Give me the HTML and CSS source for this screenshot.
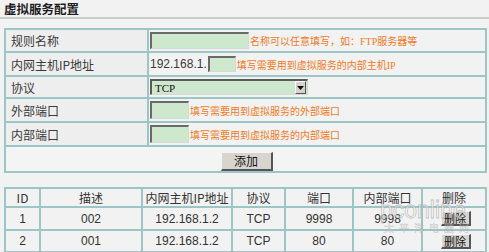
FILE: index.html
```html
<!DOCTYPE html>
<html lang="zh-CN">
<head>
<meta charset="utf-8">
<title>虚拟服务配置</title>
<link rel="stylesheet" href="styles.css">
</head>
<body>
<div class="page">
  <h1 class="title">虚拟服务配置</h1>
  <table class="form">
    <colgroup><col class="c-label"><col></colgroup>
    <tr class="r1">
      <td class="label">规则名称</td>
      <td class="field"><span class="input w-name"></span><span class="hint">名称可以任意填写，如：<span class="lat">FTP</span>服务器等</span></td>
    </tr>
    <tr class="r2">
      <td class="label">内网主机IP地址</td>
      <td class="field"><span class="ipfix">192.168.1.</span><span class="input w-ip"></span><span class="hint">填写需要用到虚拟服务的内部主机<span class="lat">IP</span></span></td>
    </tr>
    <tr class="r3">
      <td class="label">协议</td>
      <td class="field"><span class="select"><span class="sel-text">TCP</span><span class="sel-btn"><svg width="7" height="4" viewBox="0 0 7 4"><path d="M0 0h7L3.5 4z" fill="#111"/></svg></span></span></td>
    </tr>
    <tr class="r4">
      <td class="label">外部端口</td>
      <td class="field"><span class="input w-port"></span><span class="hint">填写需要用到虚拟服务的外部端口</span></td>
    </tr>
    <tr class="r5">
      <td class="label">内部端口</td>
      <td class="field"><span class="input w-port"></span><span class="hint">填写需要用到虚拟服务的内部端口</span></td>
    </tr>
    <tr class="r6">
      <td class="actions" colspan="2"><span class="btn btn-add">添加</span></td>
    </tr>
  </table>

  <div class="list-wrap">
    <table class="list">
      <colgroup>
        <col class="k1"><col class="k2"><col class="k3"><col class="k4"><col class="k5"><col class="k6"><col class="k7">
      </colgroup>
      <tr class="head">
        <td>ID</td><td>描述</td><td>内网主机IP地址</td><td>协议</td><td>端口</td><td>内部端口</td><td>删除</td>
      </tr>
      <tr class="row a">
        <td>1</td><td>002</td><td>192.168.1.2</td><td>TCP</td><td>9998</td><td>9998</td><td><span class="btn btn-del">删除</span></td>
      </tr>
      <tr class="row b">
        <td>2</td><td>001</td><td>192.168.1.2</td><td>TCP</td><td>80</td><td>80</td><td><span class="btn btn-del">删除</span></td>
      </tr>
    </table>
    <div class="watermark"><span class="wm-big">pconline</span><span class="wm-small">太平洋电脑网</span></div>
  </div>
</div>
</body>
</html>
```

FILE: styles.css
```css
* { box-sizing: border-box; }
html, body { margin: 0; padding: 0; }
body {
  background: #f2f2f2;
  font-family: "Noto Sans CJK SC", "Liberation Sans", sans-serif;
  color: #333;
  width: 489px;
  height: 252px;
  overflow: hidden;
}
.page { padding: 2px 2px 0 4px; }
.title {
  margin: 0;
  font-size: 12.5px;
  line-height: 14px;
  font-weight: bold;
  color: #1e1e1e;
  height: 15px;
  border-bottom: 2px solid #c9cdcd;
  margin-left: -4px;
  margin-right: -2px;
  padding-left: 4px;
  box-sizing: content-box;
}
.form {
  margin-top: 9px;
  border-collapse: separate;
  border-spacing: 0;
  width: 483px;
  table-layout: fixed;
  border-top: 2px solid #9cc5c5;
  border-left: 2px solid #9cc5c5;
}
.form td {
  border-right: 2px solid #9cc5c5;
  border-bottom: 2px solid #9cc5c5;
  padding: 0;
  vertical-align: middle;
}
.c-label { width: 143px; }
.form .label {
  padding-left: 5px;
  font-size: 12px;
  color: #3a3a3a;
  background: #eeeeee;
}
.form .r1 td { height: 23px; }
.form .r2 td { height: 24px; }
.form .r3 td { height: 22px; }
.form .r4 td { height: 24px; }
.form .r5 td { height: 24px; }
.form .r6 td { height: 23px; }
.field {
  padding-left: 1px !important;
  white-space: nowrap;
  font-size: 0;
}
.field > * { vertical-align: middle; }
.input {
  display: inline-block;
  background: #cde8cd;
  border-top: 2px solid #6a6a6a;
  border-left: 2px solid #6a6a6a;
  border-right: 1px solid #d8d8d8;
  border-bottom: 1px solid #d8d8d8;
}
.w-name { width: 99px; height: 17px; }
.w-ip { width: 28px; height: 16px; margin-left: 1px; }
.w-port { width: 39px; height: 18px; }
.hint {
  font-family: "Liberation Serif", "Noto Sans CJK SC", serif;
  font-size: 10px;
  color: #f07a1e;
  margin-left: 1px;
}
.hint .lat { font-family: "Liberation Serif", serif; font-size: 10px; }
.ipfix {
  font-family: "Liberation Sans", sans-serif;
  font-size: 12px;
  color: #3a3a3a;
}
.select {
  display: inline-flex;
  align-items: center;
  width: 158px;
  height: 16px;
  background: #cde8cd;
  border-top: 2px solid #5a5a5a;
  border-left: 2px solid #5a5a5a;
  border-right: 1px solid #d8d8d8;
  border-bottom: 1px solid #d8d8d8;
}
.sel-text {
  flex: 1;
  font-family: "Liberation Serif", serif;
  font-size: 11px;
  color: #111;
  padding-left: 3px;
  line-height: 12px;
}
.sel-btn {
  width: 11px;
  height: 13px;
  background: #d6d3ce;
  border-top: 1px solid #fff;
  border-left: 1px solid #fff;
  border-right: 1px solid #555;
  border-bottom: 1px solid #555;
  display: flex;
  align-items: center;
  justify-content: center;
  margin-right: 1px;
}
.actions { text-align: center; background: #f4f4f4; }
.btn {
  display: inline-block;
  background: #d8d5cf;
  color: #111;
  border-top: 1px solid #f4f4f4;
  border-left: 1px solid #f4f4f4;
  border-right: 2px solid #555;
  border-bottom: 2px solid #555;
  text-align: center;
}
.btn-add {
  width: 52px;
  height: 19px;
  font-size: 12px;
  line-height: 16px;
  margin-left: 2px;
}
.list-wrap {
  position: relative;
  margin-top: 14px;
}
.list {
  border-collapse: separate;
  border-spacing: 0;
  width: 483px;
  table-layout: fixed;
  border-top: 2px solid #9cc5c5;
  border-left: 2px solid #9cc5c5;
  font-family: "Liberation Sans", "Noto Sans CJK SC", sans-serif;
  font-size: 12px;
  color: #333;
}
.list td {
  border-right: 2px solid #9cc5c5;
  border-bottom: 2px solid #9cc5c5;
  padding: 0;
  text-align: center;
  vertical-align: middle;
  white-space: nowrap;
}
.list .head td { height: 19px; font-family: "Noto Sans CJK SC", sans-serif; line-height: 14px; }
.list .row.a td { height: 23px; }
.list .row.b td { height: 22px; }
.k1 { width: 35px; }
.k2 { width: 102px; }
.k3 { width: 90px; }
.k4 { width: 53px; }
.k5 { width: 68px; }
.k6 { width: 69px; }
.k7 { width: 64px; }
.btn-del {
  width: 30px;
  height: 15px;
  font-family: "Noto Sans CJK SC", sans-serif;
  font-size: 11px;
  line-height: 12px;
  margin-left: 3px;
}
.watermark {
  position: absolute;
  left: 376px;
  top: 12px;
  pointer-events: none;
  display: flex;
  flex-direction: column;
  align-items: flex-start;
}
.wm-big {
  font-family: "Liberation Sans", sans-serif;
  font-size: 23px;
  line-height: 23px;
  color: rgba(255, 255, 255, 0.55);
  -webkit-text-stroke: 0.8px rgba(140, 140, 140, 0.5);
  white-space: nowrap;
}
.wm-small {
  font-family: "Noto Sans CJK SC", sans-serif;
  font-size: 10px;
  line-height: 12px;
  color: rgba(255, 255, 255, 0.4);
  -webkit-text-stroke: 0.5px rgba(140, 140, 140, 0.4);
  letter-spacing: 5px;
  margin-left: 4px;
  white-space: nowrap;
}
```
